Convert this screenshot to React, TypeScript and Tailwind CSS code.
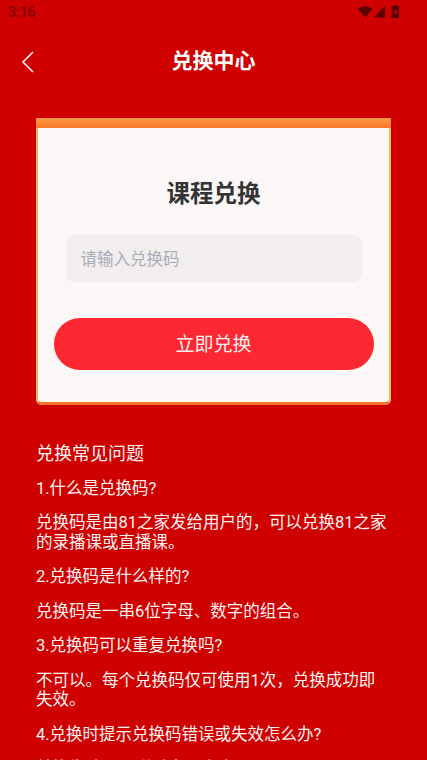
const CJK = "font-['Roboto','Noto_Sans_CJK_SC',sans-serif]";

function StatusBar() {
  return (
    <div className="flex h-6 items-center justify-between pl-2 pr-[25px]">
      <span className="text-[14px] leading-none font-medium text-[#7a0000]">3:16</span>
      <svg width="44" height="14" viewBox="0 0 44 14" fill="#5e0000">
        <path d="M0 4 C4 0.4 10.5 0.4 14.5 4 L7.25 12.5 Z" />
        <path d="M15.5 12.5 L27 12.5 L27 1 Z" />
        <path fillRule="evenodd" d="M36 0 h2.5 v1 h2.5 v12 h-7.5 v-12 h2.5 z M38.1 3.5 L35.9 7.5 h1.3 v2.8 L39.5 6.3 h-1.4 z" />
      </svg>
    </div>
  );
}

function Faq({ children }: { children: React.ReactNode }) {
  return <p>{children}</p>;
}

export default function App() {
  return (
    <div className={`h-[760px] w-[427px] overflow-hidden bg-[#cf0000] ${CJK}`}>
      <StatusBar />
      <header className="relative flex h-[76px] items-center justify-center">
        <svg className="absolute left-[21px] top-[27px]" width="13" height="22" viewBox="0 0 13 22" fill="none" stroke="#fdf3f3" strokeWidth="1.6">
          <path d="M12 1 L2 11 L12 21" />
        </svg>
        <h1 className="text-[21px] font-bold text-white">兑换中心</h1>
      </header>
      <section className="mx-9 mt-[18px] flex h-[287px] flex-col overflow-hidden rounded-b-[6px] bg-[#fcf7f7]">
        <div className="h-[10px] bg-gradient-to-b from-[#fc9d45] to-[#f9772a]" />
        <div className="flex flex-1 flex-col items-center rounded-b-[6px] border-x-2 border-b-[3px] border-x-[#fbb45f] border-b-[#f3732a] px-4">
          <h2 className="mt-[49px] text-[23.5px] leading-[34px] font-bold text-[#333333]">课程兑换</h2>
          <div className="mt-[24px] flex h-[47px] w-[296px] items-center rounded-lg bg-[#f3eeee] px-[15px] pt-[3px] text-[16.5px] text-[#a7adb8]">请输入兑换码</div>
          <button className="mt-[36px] h-[52px] w-[320px] rounded-full bg-[#fd2831] pt-[3px] text-[19px] text-[#fdf0f0]">立即兑换</button>
        </div>
      </section>
      <div className="mx-9 mt-[39px] flex flex-col gap-[15px] text-[16.5px] leading-[19.5px] text-[#fdf3f3]">
        <p className="text-[18px]">兑换常见问题</p>
        <Faq>1.什么是兑换码?</Faq>
        <Faq>兑换码是由81之家发给用户的，可以兑换81之家的录播课或直播课。</Faq>
        <Faq>2.兑换码是什么样的?</Faq>
        <Faq>兑换码是一串6位字母、数字的组合。</Faq>
        <Faq>3.兑换码可以重复兑换吗?</Faq>
        <Faq>不可以。每个兑换码仅可使用1次，兑换成功即失效。</Faq>
        <Faq>4.兑换时提示兑换码错误或失效怎么办?</Faq>
        <Faq>兑换失败，可联系客服咨询。</Faq>
      </div>
    </div>
  );
}
